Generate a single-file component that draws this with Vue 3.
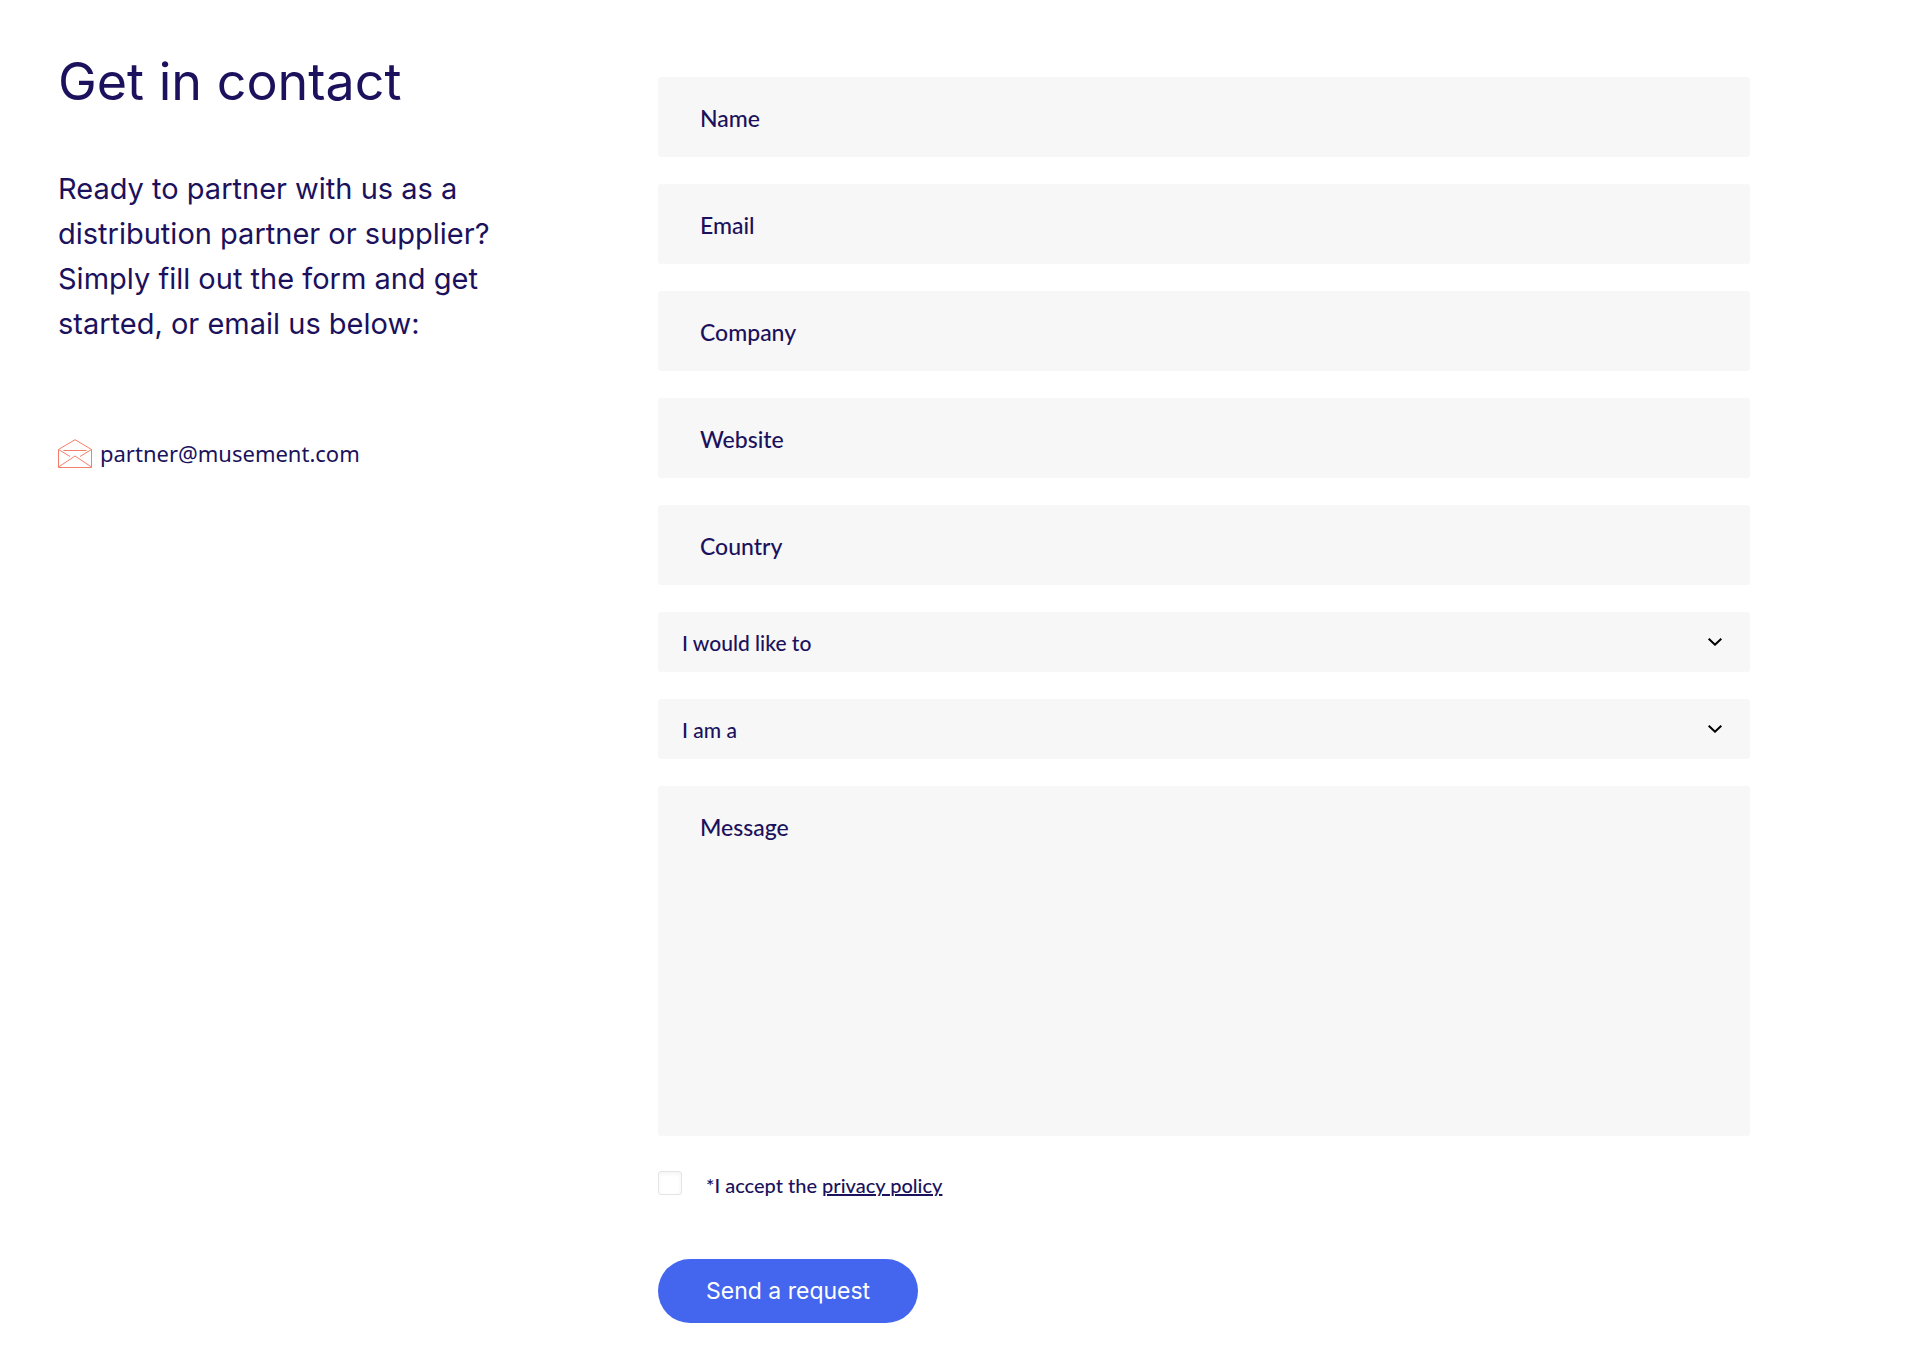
<script setup>
import { reactive } from 'vue'

const fields = [
  { id: 'name', label: 'Name', type: 'text' },
  { id: 'email', label: 'Email', type: 'email' },
  { id: 'company', label: 'Company', type: 'text' },
  { id: 'website', label: 'Website', type: 'text' },
  { id: 'country', label: 'Country', type: 'text' },
]
const selects = [
  { id: 'intent', label: 'I would like to' },
  { id: 'role', label: 'I am a' },
]
const form = reactive({
  name: '', email: '', company: '', website: '', country: '',
  intent: '', role: '', message: '', accepted: false,
})
</script>

<template>
  <main class="contact">
    <section class="intro">
      <h1>Get in contact</h1>
      <p>Ready to partner with us as a distribution partner or supplier? Simply fill out the form and get started, or email us below:</p>
      <a class="mail" href="mailto:partner@musement.com">
        <svg width="34" height="29" viewBox="0 0 34 29" fill="none" stroke="#f27f69" stroke-width="1" stroke-linejoin="round" aria-hidden="true">
          <path d="M.5 10.500 17 .700 33.500 10.500V28.500H.5Z" />
          <path d="M5.500 11.500H28.500M.5 10.500 12 17.500M33.500 10.500 22 17.500M.5 28 17 17 33.500 28" />
        </svg>
        <span>partner@musement.com</span>
      </a>
    </section>

    <form class="form" @submit.prevent>
      <div v-for="f in fields" :key="f.id" class="field">
        <input :id="f.id" v-model="form[f.id]" :type="f.type" placeholder=" " />
        <label :for="f.id">{{ f.label }}</label>
      </div>
      <div v-for="s in selects" :key="s.id" class="pick">
        <select :id="s.id" v-model="form[s.id]" :aria-label="s.label">
          <option value="">{{ s.label }}</option>
        </select>
        <svg width="14" height="8" viewBox="0 0 14 8" fill="none" stroke="#000" stroke-width="2" aria-hidden="true">
          <path d="M.7.700 7 6.700 13.300.700" />
        </svg>
      </div>
      <div class="field">
        <textarea id="message" v-model="form.message" placeholder=" "></textarea>
        <label for="message">Message</label>
      </div>
      <div class="accept">
        <input id="accept" v-model="form.accepted" type="checkbox" />
        <div class="terms">
          <label for="accept">*I accept the </label>
          <a href="#privacy">privacy policy</a>
        </div>
      </div>
      <button type="submit">Send a request</button>
    </form>
  </main>
</template>

<style>
body {
  margin: 0;
  background: #fff;
}
</style>

<style scoped>
* {
  box-sizing: border-box;
}
.contact {
  display: grid;
  grid-template-columns: 480px minmax(0, 1fr);
  column-gap: 120px;
  padding: 50px 156px 43px 58px;
  color: #1b115c;
  font-family: "Noto Sans", sans-serif;
}
h1 {
  margin: 0;
  font: 400 52px/64px Inter, sans-serif;
}
p {
  margin: 52px 0 0;
  font: 400 29px/45px Inter, sans-serif;
}
.mail {
  display: flex;
  align-items: center;
  gap: 8px;
  width: max-content;
  margin-top: 89px;
  color: inherit;
  font-size: 22px;
  line-height: 36px;
  text-decoration: none;
}
.form {
  display: flex;
  flex-direction: column;
  gap: 27px;
  padding-top: 27px;
}
.field,
.pick {
  display: grid;
  align-items: start;
}
.field > *,
.pick > * {
  grid-area: 1 / 1;
}
input,
select,
textarea {
  margin: 0;
  border: 0;
  border-radius: 3px;
  background: #f7f7f7;
  color: inherit;
  font: 500 23px/32px Lato, sans-serif;
}
.field input,
.field textarea {
  width: 100%;
  height: 80px;
  padding: 24px 42px;
}
.field textarea {
  display: block;
  height: 350px;
  resize: none;
}
.field label {
  padding: 25px 42px 0;
  font: 500 23px/32px Lato, sans-serif;
  pointer-events: none;
}
.field :not(:placeholder-shown) + label {
  visibility: hidden;
}
.pick {
  align-items: center;
}
select {
  width: 100%;
  height: 60px;
  padding: 2px 60px 0 24px;
  appearance: none;
  font-size: 21px;
}
.pick svg {
  justify-self: end;
  margin-right: 28px;
  pointer-events: none;
}
.accept {
  display: flex;
  align-items: flex-start;
  gap: 24px;
  height: 29px;
  margin-top: 8px;
}
.accept input {
  width: 24px;
  height: 24px;
  appearance: none;
  border: 1px solid #e4e4e4;
  background: #fff;
  box-shadow: inset 0 2px 4px #f4f4f4;
}
.accept input:checked {
  background: #4466ee;
}
.terms {
  font: 500 20px/28px Lato, sans-serif;
}
.terms a {
  color: inherit;
  text-decoration-thickness: 2px;
}
button {
  align-self: flex-start;
  height: 64px;
  margin-top: 32px;
  padding: 0 48px;
  border: 0;
  border-radius: 32px;
  background: #4466ee;
  color: #fff;
  font: 400 23px/32px Inter, sans-serif;
}
</style>
